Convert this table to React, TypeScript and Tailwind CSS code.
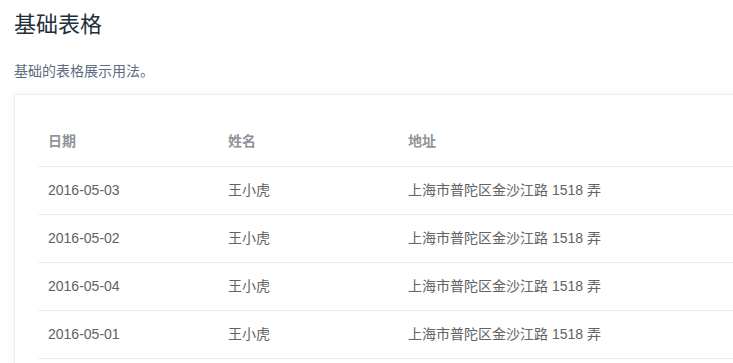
const rows = [
  { date: '2016-05-03', name: '王小虎', address: '上海市普陀区金沙江路 1518 弄' },
  { date: '2016-05-02', name: '王小虎', address: '上海市普陀区金沙江路 1518 弄' },
  { date: '2016-05-04', name: '王小虎', address: '上海市普陀区金沙江路 1518 弄' },
  { date: '2016-05-01', name: '王小虎', address: '上海市普陀区金沙江路 1518 弄' },
]

export default function App() {
  return (
    <div className="min-h-screen overflow-hidden bg-white pl-[14px] font-['Helvetica_Neue','Liberation_Sans','Noto_Sans_CJK_SC',sans-serif]">
      <h3 className="pt-[10px] text-[22px] font-normal leading-[30px] text-[#1f2f3d]">基础表格</h3>
      <p className="mt-[20px] text-[14px] leading-[22px] text-[#5e6d82]">基础的表格展示用法。</p>

      <div className="mt-[12px] w-[760px] rounded-[3px] border border-[#ebebeb] bg-white p-[23px] shadow-[0_0_8px_0_rgba(232,237,250,0.6)]">
        <table className="w-full border-collapse text-left text-[14px]">
          <thead>
            <tr className="h-[48px] border-b border-[#ebeef5]">
              <th className="w-[180px] px-[10px] font-bold text-[#909399]">日期</th>
              <th className="w-[180px] px-[10px] font-bold text-[#909399]">姓名</th>
              <th className="px-[10px] font-bold text-[#909399]">地址</th>
            </tr>
          </thead>
          <tbody>
            {rows.map((row, i) => (
              <tr key={i} className="h-[48px] border-b border-[#ebeef5] text-[#606266]">
                <td className="px-[10px]">{row.date}</td>
                <td className="px-[10px]">{row.name}</td>
                <td className="px-[10px]">{row.address}</td>
              </tr>
            ))}
          </tbody>
        </table>
      </div>
    </div>
  )
}
